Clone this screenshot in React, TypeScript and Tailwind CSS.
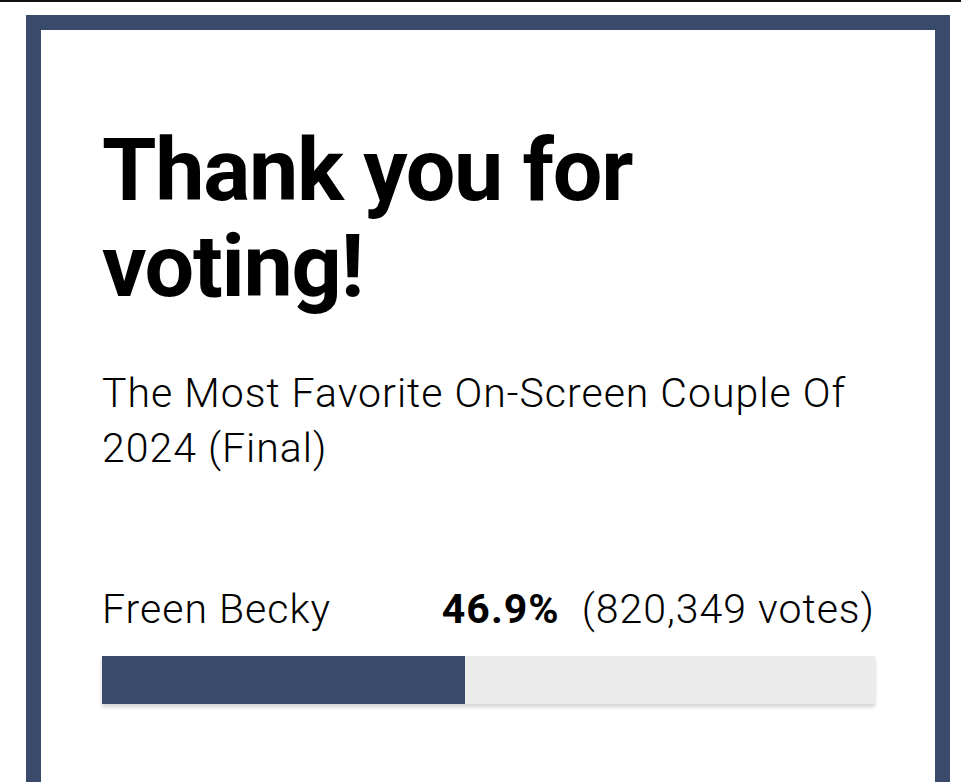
// Poll result card shown after a vote is cast.
const POLL = {
  title: 'The Most Favorite On-Screen Couple Of 2024 (Final)',
  choice: 'Freen Becky',
  percent: 46.9,
  votes: 820349,
};

function ResultBar({ percent }: { percent: number }) {
  return (
    <div className="h-[48px] w-full bg-[#ebebeb] shadow-[0_3px_4px_rgba(0,0,0,0.18)]">
      <div className="h-full bg-[#3a4a6b]" style={{ width: `${percent}%` }} />
    </div>
  );
}

export default function App() {
  return (
    <div className="min-h-[782px] overflow-hidden border-t-2 border-[#111] bg-white font-['Roboto',sans-serif] text-black">
      <div className="pl-[26px] pr-[11px] pt-[13px]">
        <section className="border-[15px] border-b-0 border-[#3a4a6b] pb-[120px] pl-[61px] pr-[60px] pt-[92px]">
          <h1 className="text-[88px] font-bold leading-[96px] tracking-[-1.3px]">Thank you for voting!</h1>
          <p className="mt-[52px] text-[41px] font-light leading-[55px] tracking-[1px]">{POLL.title}</p>
          <div className="mt-[106px] flex items-baseline justify-between text-[41px] font-light leading-[55px] tracking-[1px]">
            <span>{POLL.choice}</span>
            <span>
              <span className="font-bold">{POLL.percent}%</span>
              <span className="ml-[22px]">({POLL.votes.toLocaleString('en-US')} votes)</span>
            </span>
          </div>
          <div className="mt-[19px]">
            <ResultBar percent={POLL.percent} />
          </div>
        </section>
      </div>
    </div>
  );
}
